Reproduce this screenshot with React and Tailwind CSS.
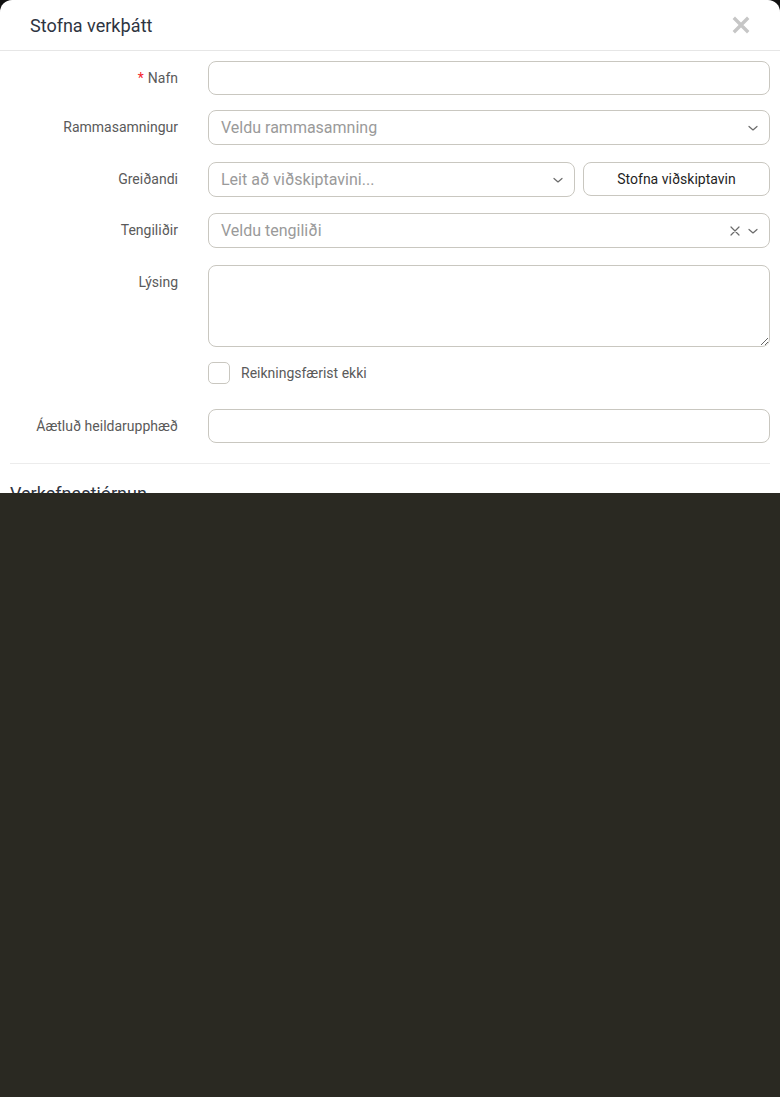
import React from "react";

function Chevron() {
  return (
    <svg width="12" height="12" viewBox="0 0 12 12" fill="none" stroke="#6b6b6b" strokeWidth="1.2" strokeLinecap="round" strokeLinejoin="round">
      <path d="M2 4.5l4 3.5 4-3.5" />
    </svg>
  );
}

function Row({ label, required, children, className = "" }) {
  return (
    <div className={`flex items-start ${className}`}>
      <label className="w-[168px] shrink-0 pt-[7px] text-right text-[14px] leading-5 text-[#5a5a5a]">
        {required && <span className="mr-1 text-[#f5222d]">*</span>}
        {label}
      </label>
      <div className="ml-[30px] flex flex-1 gap-2">{children}</div>
    </div>
  );
}

function Select({ placeholder, clearable, className = "" }) {
  return (
    <div className={`flex h-[35px] items-center rounded-lg border border-[#c9c7c0] bg-white pl-3 pr-[10px] ${className}`}>
      <span className="flex-1 text-[16px] text-[#9a9a9a]">{placeholder}</span>
      {clearable && (
        <svg width="12" height="12" viewBox="0 0 12 12" fill="none" stroke="#6b6b6b" strokeWidth="1.2" strokeLinecap="round" className="mr-[6px]">
          <path d="M2 2l8 8M10 2l-8 8" />
        </svg>
      )}
      <Chevron />
    </div>
  );
}

export default function App() {
  return (
    <div className="min-h-screen bg-[#2a2922]" style={{ fontFamily: "Roboto, 'Liberation Sans', sans-serif" }}>
      <div className="bg-[#111]">
        <div className="h-[493px] overflow-hidden rounded-t-[12px] bg-white">
          <div className="flex h-[51px] items-center justify-between border-b border-[#e6e6e6] pl-[30px] pr-[30px]">
            <h2 className="text-[18px] text-[#2e3441]">Stofna verkþátt</h2>
            <svg width="18" height="18" viewBox="0 0 18 18" fill="none" stroke="#c6c6c6" strokeWidth="3.4" strokeLinecap="square">
              <path d="M3 3l12 12M15 3L3 15" />
            </svg>
          </div>

          <div className="px-[10px] pt-[10px]">
            <Row label="Nafn" required>
              <input className="h-[34px] w-full rounded-lg border border-[#c9c7c0] bg-white px-3 text-[16px] outline-none" />
            </Row>

            <Row label="Rammasamningur" className="mt-[15px]">
              <Select placeholder="Veldu rammasamning" className="w-full" />
            </Row>

            <Row label="Greiðandi" className="mt-[17px]">
              <Select placeholder="Leit að viðskiptavini..." className="h-[34px] flex-1" />
              <button className="h-[34px] w-[187px] rounded-lg border border-[#c9c7c0] bg-white text-[14px] text-[#1f1f1f]">
                Stofna viðskiptavin
              </button>
            </Row>

            <Row label="Tengiliðir" className="mt-[16px]">
              <Select placeholder="Veldu tengiliði" clearable className="w-full" />
            </Row>

            <Row label="Lýsing" className="mt-[17px]">
              <textarea className="block h-[82px] w-full rounded-lg border border-[#c9c7c0] bg-white px-3 py-1 text-[16px] outline-none" />
            </Row>

            <div className="ml-[198px] mt-[15px] flex items-center gap-[11px]">
              <span className="h-[22px] w-[22px] rounded-[5px] border border-[#c9c7c0] bg-white" />
              <span className="text-[14px] text-[#5a5a5a]">Reikningsfærist ekki</span>
            </div>

            <Row label="Áætluð heildarupphæð" className="mt-[25px]">
              <input className="h-[34px] w-full rounded-lg border border-[#c9c7c0] bg-white px-3 text-[16px] outline-none" />
            </Row>

            <div className="mt-[20px] h-px bg-[#ececec]" />

            <h3 className="mt-[16px] text-[18px] leading-7 text-[#2e3441]">Verkefnastjórnun</h3>
          </div>
        </div>
      </div>
    </div>
  );
}
